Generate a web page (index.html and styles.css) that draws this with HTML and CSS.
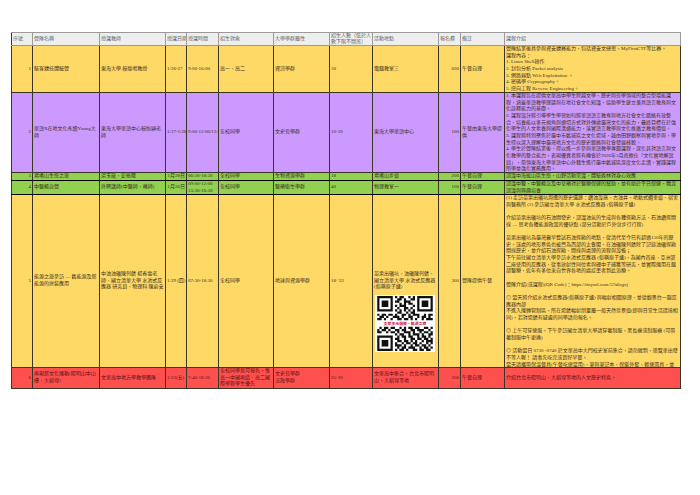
FILE: index.html
```html
<!DOCTYPE html>
<html lang="zh-Hant">
<head>
<meta charset="utf-8">
<title>營隊課程表</title>
<link rel="stylesheet" href="styles.css">
</head>
<body>
<div class="sheet">
<table class="grid">
<colgroup>
<col class="w21"><col class="w67"><col class="w66"><col class="w21"><col class="w32"><col class="w55"><col class="w56"><col class="w43"><col class="w66"><col class="w22"><col class="w44"><col class="w176">
</colgroup>
<tr class="head">
<th><div class="c">序號</div></th>
<th><div class="c">營隊名稱</div></th>
<th><div class="c">授課教師</div></th>
<th><div class="c nw">授課日期</div></th>
<th><div class="c nw">授課時間</div></th>
<th><div class="c">招生對象</div></th>
<th><div class="c">大學學群屬性</div></th>
<th><div class="c">招生人數（低於人數下限不開班）</div></th>
<th><div class="c">活動地點</div></th>
<th><div class="c nw">報名費</div></th>
<th><div class="c">備註</div></th>
<th><div class="c">課程介紹</div></th>
</tr>
<tr class="r1 yellow">
<td><div class="c r">1</div></td>
<td><div class="c">駭客競技體驗營</div></td>
<td><div class="c">東海大學 賴俊鳴教授</div></td>
<td><div class="c nw">1/26-27</div></td>
<td><div class="c nw">9:00-16:00</div></td>
<td><div class="c">高一、高二</div></td>
<td><div class="c">資訊學群</div></td>
<td><div class="c">30</div></td>
<td><div class="c">電腦教室三</div></td>
<td><div class="c r">600</div></td>
<td><div class="c">午餐自理</div></td>
<td><div class="c top">營隊結業後具參與資安競賽能力，包括資安文捷思、MyFirstCTF等比賽。<br>課程內容：<br>1. Linux Shell操作<br>2. 封包分析 Packet analysis<br>3. 網路弱點 Web Exploitation 。<br>4. 密碼學 Cryptography。<br>5. 逆向工程 Reverse Engineering。</div></td>
</tr>
<tr class="r2 purple">
<td><div class="c r">2</div></td>
<td><div class="c">華語X在地文化永續Young大師</div></td>
<td><div class="c">東海大學華語中心賴怡穎老師</div></td>
<td><div class="c nw">1/27-1/28</div></td>
<td><div class="c nw">9:00-12:00/13:00-16:00</div></td>
<td><div class="c">全校同學</div></td>
<td><div class="c">文史哲學群</div></td>
<td><div class="c">10-30</div></td>
<td><div class="c">東海大學華語中心</div></td>
<td><div class="c r">100</div></td>
<td><div class="c">午餐由東海大學提供</div></td>
<td><div class="c top">1. 本課程旨在提供文華高中學生跨越文學、歷史與哲學領域的整合型增能課程，涵蓋華語教學理論與在地社會文化知識，協助學生建立兼具語言教育與文化詮釋能力的基礎。<br>2. 課程設計將引導學生學習如何將華語語言教育與地方社會文化脈絡有效整合，培養能以多元視角與適切方式對外傳遞臺灣文化的能力，最終目標在於強化學生的人文素養與國際溝通能力，落實語言教學與文化推廣之教育價值。<br>3. 課程將特別聚焦於臺中市舊城區之文化場域，藉由田野觀察與實地參與，學生得以深入理解中臺灣地方文化的歷史脈絡與社會發展樣貌。<br>4. 學生於營隊結業後，得以進一步參與華語教學專題課程，深化其對語言與文化教學的整合能力，表現優異者將有機會於2026年3月底擔任「文化實地解說員」，帶領東海大學華語中心外籍生進行臺中舊城區深度文化走讀，實踐課程所學並強化實務應用。</div></td>
</tr>
<tr class="r3 green">
<td><div class="c r">3</div></td>
<td><div class="c">鳶嘴山生態之旅</div></td>
<td><div class="c">梁玉龍、彭振隆</div></td>
<td><div class="c r nw">1月28日</div></td>
<td><div class="c nw">06:50-18:30</div></td>
<td><div class="c">全校同學</div></td>
<td><div class="c">生物資源學群</div></td>
<td><div class="c">18</div></td>
<td><div class="c">鳶嘴山步道</div></td>
<td><div class="c r">200</div></td>
<td><div class="c">午餐自理</div></td>
<td><div class="c">認識中海拔山區生態，山野活動常識，體驗森林對身心效應</div></td>
</tr>
<tr class="r4 green">
<td><div class="c r">4</div></td>
<td><div class="c">中醫概念營</div></td>
<td><div class="c">外聘講師(中醫師、藥師)</div></td>
<td><div class="c r nw">1月26日</div></td>
<td><div class="c nw">09:00-12:00<br>13:30-16:30</div></td>
<td><div class="c">全校同學</div></td>
<td><div class="c">醫藥衛生學群</div></td>
<td><div class="c">40</div></td>
<td><div class="c">物理教室一</div></td>
<td><div class="c r">100</div></td>
<td><div class="c">午餐自理</div></td>
<td><div class="c">認識中醫，中醫概念及中草藥對於醫療保健的幫助，並有助於平日保健，職涯認識與興趣培養</div></td>
</tr>
<tr class="r5 yellow">
<td><div class="c r">5</div></td>
<td><div class="c">能源之旅參訪 — 舊能源及新能源的拼裝應用</div></td>
<td><div class="c">中油油礦陳列館 楊春雪老師、國立清華大學 水池式反應器 研究員、物理科 陳俞安</div></td>
<td><div class="c nw">1/29 (四)</div></td>
<td><div class="c nw">07:30-18:30</div></td>
<td><div class="c">全校同學</div></td>
<td><div class="c">地球與資源學群</div></td>
<td><div class="c">18~33</div></td>
<td class="loc"><div class="c">苗栗出礦坑、油礦陳列館、國立清華大學 水池式反應器(俗稱原子爐)</div>
<div class="qr">
<svg width="60" height="57" viewBox="-1 -0.5 27 26" preserveAspectRatio="none" aria-hidden="true">
<rect x="-1" y="-0.5" width="27" height="26" fill="#fff"/>
<path fill="#111" fill-rule="evenodd" d="M0 0h7v7h-7zM1 1v5h5v-5zM2 2h3v3h-3zM18 0h7v7h-7zM19 1v5h5v-5zM20 2h3v3h-3zM0 18h7v7h-7zM1 19v5h5v-5zM2 20h3v3h-3z"/>
<path fill="#111" d="M8 0h1v1h-1zM10 0h2v1h-2zM14 0h1v1h-1zM16 0h1v1h-1zM9 1h2v1h-2zM12 1h1v1h-1zM15 1h2v1h-2zM8 2h2v1h-2zM12 2h3v1h-3zM10 3h1v1h-1zM12 3h1v1h-1zM14 3h2v1h-2zM8 4h1v1h-1zM10 4h3v1h-3zM16 4h1v1h-1zM9 5h1v1h-1zM12 5h2v1h-2zM15 5h1v1h-1zM8 6h1v1h-1zM10 6h1v1h-1zM12 6h1v1h-1zM14 6h1v1h-1zM16 6h1v1h-1zM9 7h2v1h-2zM13 7h1v1h-1zM15 7h2v1h-2zM0 8h1v1h-1zM2 8h2v1h-2zM5 8h2v1h-2zM8 8h1v1h-1zM11 8h2v1h-2zM14 8h1v1h-1zM16 8h3v1h-3zM21 8h1v1h-1zM23 8h2v1h-2zM1 9h2v1h-2zM4 9h1v1h-1zM7 9h3v1h-3zM11 9h1v1h-1zM14 9h2v1h-2zM18 9h1v1h-1zM20 9h2v1h-2zM23 9h1v1h-1zM0 10h2v1h-2zM3 10h1v1h-1zM6 10h1v1h-1zM9 10h2v1h-2zM12 10h2v1h-2zM15 10h1v1h-1zM17 10h1v1h-1zM20 10h1v1h-1zM22 10h3v1h-3zM1 14h1v1h-1zM3 14h2v1h-2zM6 14h2v1h-2zM10 14h1v1h-1zM12 14h1v1h-1zM14 14h2v1h-2zM17 14h2v1h-2zM21 14h2v1h-2zM24 14h1v1h-1zM0 15h1v1h-1zM2 15h2v1h-2zM5 15h1v1h-1zM8 15h2v1h-2zM11 15h2v1h-2zM15 15h2v1h-2zM18 15h3v1h-3zM23 15h1v1h-1zM0 16h2v1h-2zM4 16h1v1h-1zM6 16h2v1h-2zM9 16h1v1h-1zM12 16h3v1h-3zM16 16h1v1h-1zM19 16h1v1h-1zM21 16h2v1h-2zM24 16h1v1h-1zM8 17h1v1h-1zM10 17h2v1h-2zM14 17h1v1h-1zM16 17h3v1h-3zM20 17h1v1h-1zM23 17h2v1h-2zM9 18h1v1h-1zM11 18h2v1h-2zM14 18h2v1h-2zM18 18h1v1h-1zM20 18h2v1h-2zM23 18h1v1h-1zM8 19h2v1h-2zM12 19h1v1h-1zM15 19h2v1h-2zM18 19h2v1h-2zM21 19h2v1h-2zM24 19h1v1h-1zM9 20h2v1h-2zM12 20h2v1h-2zM15 20h1v1h-1zM17 20h1v1h-1zM20 20h1v1h-1zM22 20h3v1h-3zM8 21h1v1h-1zM11 21h1v1h-1zM13 21h2v1h-2zM16 21h2v1h-2zM19 21h1v1h-1zM22 21h1v1h-1zM24 21h1v1h-1zM8 22h3v1h-3zM12 22h1v1h-1zM15 22h1v1h-1zM17 22h2v1h-2zM20 22h2v1h-2zM23 22h1v1h-1zM9 23h1v1h-1zM11 23h2v1h-2zM14 23h3v1h-3zM19 23h1v1h-1zM21 23h2v1h-2zM24 23h1v1h-1zM8 24h1v1h-1zM10 24h2v1h-2zM13 24h1v1h-1zM16 24h2v1h-2zM19 24h2v1h-2zM22 24h2v1h-2z"/>
<text x="12.5" y="13.1" text-anchor="middle" font-size="1.75" fill="#d0103a" font-family="Noto Sans CJK TC, sans-serif" font-weight="bold">文華多元選修‧能源之旅</text>
</svg>
</div>
</td>
<td><div class="c r">300</div></td>
<td><div class="c">營隊提供午餐</div></td>
<td><div class="c top">(1) 走訪苗栗出礦坑周遭的歷史遺跡：鑽油設施、古油井、地軌式纜車道、宿舍與醫務所 (2) 參訪國立清華大學 水池式反應器 (俗稱原子爐)<br><br>介紹苗栗出礦坑的石油開發史，認識油氣的生成與各種探勘方法、石油鑽探開採 … 思考各種能源政策的優缺點 (部分活動於戶外含步行行程)<br><br>苗栗出礦坑為臺灣最早嘗試石油探勘的地點，從清代至今已有超過150年的歷史。該處的地形景色也被譽為西部的太魯閣。在油礦陳列館除了記錄油礦探勘開採歷史，並介紹石油探勘、開採與處理的流程與設備；<br>下午前往國立清華大學參訪水池式反應器 (俗稱原子爐)，為國內首座、亞洲第二座使用的反應器，從事放射性同位素與硼中子捕獲等研究，並實際運用在腦部醫療，近年有多位來自世界各地的癌症患者到此治療。<br><br>營隊介紹(或課程)(QR Code)：https://tinyurl.com/57a6sgvj<br><br>◎ 當天將介紹水池式反應器(俗稱原子爐) 與輻射相關原理，並從觀景台一窺反應器內部<br>不進入運轉管制區，所在場館輻射劑量屬一般天然背景值(即與日常生活環境相同)，若對場館有疑慮的同學請勿報名。<br><br>◎ 上午可穿便服，下午參訪國立清華大學請穿著制服，黑長褲或制服褲 (可帶著制服中午更換)<br><br>◎ 活動當日 0730 -0740 於文華高中大門校史室前集合，請勿遲到，遊覽車出發不等人喔！ 請事先吃完或買好早餐。<br>當天請攜帶保溫餐具(午餐吃便當用)、筆與筆記本、保暖外套、輕便雨具，並</div></td>
</tr>
<tr class="r6 red">
<td><div class="c r">6</div></td>
<td><div class="c">再現新文化運動(陽明山中山樓、大稻埕)</div></td>
<td><div class="c">文華高中地方學教學團隊</div></td>
<td><div class="c nw">1/23(五)</div></td>
<td><div class="c nw">7:40-18:30</div></td>
<td><div class="c">全校同學皆可報名，惟高一中國再造、高二國際學程學生優先</div></td>
<td><div class="c">文史哲學群<br>法政學群</div></td>
<td><div class="c">25-30</div></td>
<td><div class="c">文華高中集合，台北市陽明山，大稻埕等地</div></td>
<td><div class="c r">200</div></td>
<td><div class="c">午餐自理</div></td>
<td><div class="c">介紹台北市陽明山、大稻埕等地的人文歷史特色。</div></td>
</tr>
</table>
</div>
</body>
</html>
```

FILE: styles.css
```css
html, body {
  margin: 0;
  background: #ffffff;
}

body {
  font-family: "Liberation Serif", "Noto Sans CJK TC", serif;
  font-size: 5px;
  line-height: 6.67px;
  color: #3a3020;
}

.sheet {
  padding: 32px 0 0 11px;
}

.grid {
  border-collapse: collapse;
  table-layout: fixed;
  width: 670px;
}

.w21 { width: 21px; }
.w67 { width: 67px; }
.w66 { width: 66px; }
.w32 { width: 32px; }
.w55 { width: 55px; }
.w56 { width: 56px; }
.w43 { width: 43px; }
.w22 { width: 22px; }
.w44 { width: 44px; }
.w176 { width: 176px; }

.grid th,
.grid td {
  border: 1px solid #3b3526;
  padding: 0;
  font-weight: normal;
  text-align: left;
  vertical-align: top;
}

.c {
  height: var(--h);
  overflow: hidden;
  display: flex;
  flex-direction: column;
  justify-content: center;
  padding: 0 1px;
  word-break: break-all;
}

.c.top { justify-content: flex-start; }
.c.r { text-align: right; }
.c.nw { white-space: nowrap; }

.head { --h: 12px; }
.head th {
  background: #eeeeee;
  color: #666666;
  border-color: #9a9a9a;
  line-height: 6px;
}
.head th:first-child { border-left-color: #3b3526; }

.r1 { --h: 46px; }
.r2 { --h: 79px; }
.r3 { --h: 7px; }
.r4 { --h: 13px; }
.r5 { --h: 172px; }
.r6 { --h: 20px; }

.yellow td { background: #ffd966; }
.purple td { background: #cc99ff; }
.green td { background: #92d050; border-top-color: #000; border-bottom-color: #000; }
.red td { background: #ff5050; color: #5a1010; }

.loc { position: relative; }

.qr {
  position: absolute;
  left: 2px;
  top: 100px;
  width: 60px;
  height: 57px;
  line-height: 0;
}
```
